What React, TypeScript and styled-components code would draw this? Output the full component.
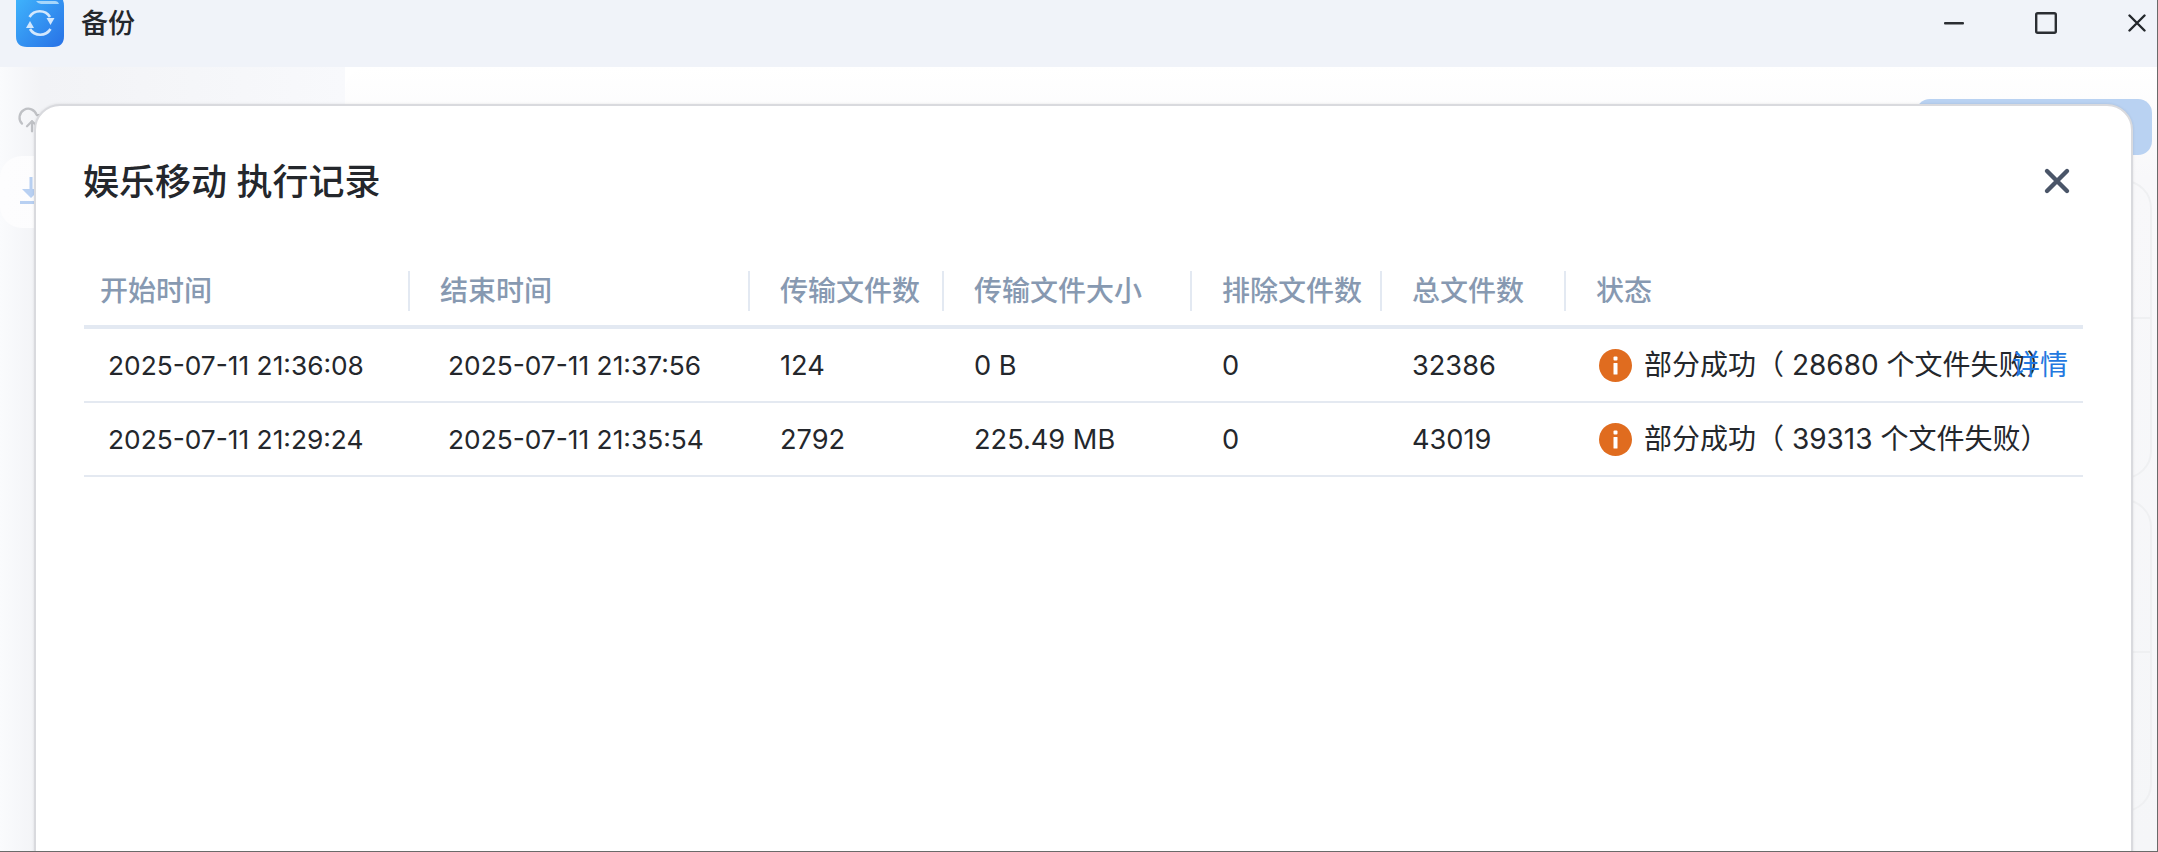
import React from 'react';
import styled, { createGlobalStyle } from 'styled-components';
import { CloudUpload } from 'lucide-react';

const GlobalStyle = createGlobalStyle`
	html, body {
		margin: 0;
		padding: 0;
		background: #fff;
	}
	* {
		box-sizing: border-box;
	}
`;

const COLUMNS = '325px 340px 194px 248px 190px 184px 518px';
const FONT = 'Inter, "Noto Sans CJK SC", sans-serif';

const Window = styled.div`
	position: relative;
	width: 2158px;
	height: 852px;
	overflow: hidden;
	display: flex;
	flex-direction: column;
	font-family: ${FONT};
	color: #24272c;
	border-right: 1px solid #6a6a6a;
	border-bottom: 1px solid #6a6a6a;
`;

const TitleBar = styled.div`
	flex: 0 0 67px;
	background: #f0f3f9;
	display: flex;
	align-items: flex-start;
	padding-left: 16px;
`;

const AppName = styled.div`
	font-size: 27px;
	font-weight: 500;
	line-height: 48px;
	margin-left: 17px;
`;

const WindowControls = styled.div`
	margin-left: auto;
	display: flex;
	align-items: center;
	height: 46px;
	padding-right: 11px;
`;

const MinimizeIcon = styled.svg`
	width: 20px;
	height: 20px;
`;

const MaximizeIcon = styled.svg`
	width: 22px;
	height: 22px;
	margin-left: 71px;
`;

const CloseIcon = styled.svg`
	width: 18px;
	height: 18px;
	margin-left: 71px;
`;

const Body = styled.div`
	flex: 1;
	display: flex;
	min-height: 0;
`;

const Sidebar = styled.div`
	flex: 0 0 345px;
	padding-top: 38px;
	background: linear-gradient(90deg, #fafbfd 0%, #f2f3f6 12%, #f8f9fc 100%);
`;

const SidebarIcon = styled.div`
	height: 30px;
	padding-left: 17px;
	color: #bfc1c5;
	margin-bottom: 21px;
`;

const NavItem = styled.div`
	height: 72px;
	border-radius: 22px;
	background: linear-gradient(90deg, #fdfdfe, #f9f9fb);
	display: flex;
	align-items: center;
	padding-left: 20px;
`;

const Main = styled.div`
	flex: 1;
	min-width: 0;
	padding: 32px 5px 0 0;
	border-radius: 24px 0 0 0;
	background: linear-gradient(180deg, #ffffff 0%, #f8f8fa 14%, #f5f6f8 100%);
	display: flex;
	flex-direction: column;
	align-items: flex-end;
`;

const BlueButton = styled.div`
	width: 236px;
	height: 56px;
	flex: none;
	border-radius: 14px;
	background: #b9d2f2;
`;

const BackgroundCard = styled.div<{ $height: number; $split: number }>`
	width: 100%;
	flex: none;
	height: ${p => p.$height}px;
	margin-top: ${p => (p.$height === 299 ? 25 : 20)}px;
	border: 2px solid #eff0f2;
	border-radius: 28px;
	display: grid;
	grid-template-rows: ${p => p.$split}px 1fr;
`;

const CardDivider = styled.div`
	border-bottom: 2px solid #eff0f2;
`;

const Dialog = styled.div`
	position: absolute;
	left: 34px;
	top: 104px;
	width: 2099px;
	height: 800px;
	background: #fff;
	border: 2px solid #d9dade;
	border-radius: 26px;
	box-shadow: 0 0 3px rgba(0, 0, 0, 0.1);
	padding: 0 48px;
`;

const DialogHeader = styled.div`
	height: 165px;
	display: flex;
	align-items: flex-start;
	justify-content: space-between;
	padding-top: 52px;
`;

const DialogTitle = styled.div`
	margin-left: -1px;
	font-size: 36px;
	line-height: 48px;
	font-weight: 500;
	color: #24272c;
`;

const DialogClose = styled.svg`
	width: 30px;
	height: 30px;
	margin: 8px 11px 0 0;
`;

const HeaderRow = styled.div`
	display: grid;
	grid-template-columns: ${COLUMNS};
	height: 58px;
	border-bottom: 4px solid #e3e9f2;
`;

const HeaderCell = styled.div<{ $first?: boolean; $divided?: boolean }>`
	height: 40px;
	padding-left: ${p => (p.$first ? 16 : 31)}px;
	font-size: 28px;
	line-height: 41px;
	font-weight: 500;
	color: #8799b1;
	white-space: nowrap;
	${p => (p.$divided ? 'border-right: 2px solid #e3e9f2; margin-right: -1px;' : '')}
`;

const Row = styled.div`
	display: grid;
	grid-template-columns: ${COLUMNS};
	height: 74px;
	align-items: center;
	border-bottom: 2px solid #e4e9f1;
`;

const Cell = styled.div<{ $pad?: number; $small?: boolean }>`
	padding: 2px 0 0 ${p => p.$pad ?? 31}px;
	font-size: ${p => (p.$small ? 26.3 : 27.2)}px;
	line-height: 40px;
	white-space: nowrap;
`;

const StatusCell = styled.div`
	position: relative;
	padding-left: 34px;
	display: flex;
	align-items: center;
	gap: 12px;
	font-size: 28px;
	line-height: 40px;
	white-space: nowrap;
`;

const StatusIcon = styled.svg`
	width: 33px;
	height: 33px;
	flex: none;
`;

const DetailLink = styled.a`
	position: absolute;
	left: 447px;
	top: 0;
	font-size: 28px;
	line-height: 40px;
	color: #2378e0;
	text-decoration: none;
`;

const records = [
	{
		start: '2025-07-11 21:36:08',
		end: '2025-07-11 21:37:56',
		count: '124',
		size: '0 B',
		excluded: '0',
		total: '32386',
		status: '部分成功（ 28680 个文件失败）',
		detail: true,
	},
	{
		start: '2025-07-11 21:29:24',
		end: '2025-07-11 21:35:54',
		count: '2792',
		size: '225.49 MB',
		excluded: '0',
		total: '43019',
		status: '部分成功（ 39313 个文件失败）',
		detail: false,
	},
];

const headers = ['开始时间', '结束时间', '传输文件数', '传输文件大小', '排除文件数', '总文件数', '状态'];

const AppLogo = () => (
	<svg width="48" height="47" viewBox="0 0 48 47">
		<defs>
			<linearGradient id="logoFill" x1="0" y1="0" x2="1" y2="1">
				<stop offset="0" stopColor="#40b6fd" />
				<stop offset="1" stopColor="#2871e6" />
			</linearGradient>
		</defs>
		<path d="M0 -6 H36 Q48 -6 48 6 V36 Q48 47 37 47 H11 Q0 47 0 36 Z" fill="url(#logoFill)" />
		<path d="M20 1 H39 Q42 1 43 4 H25 Q22 4 20 1 Z" fill="#a6d6fb" />
		<path d="M13.5 17 A12 12 0 0 1 34 17" fill="none" stroke="#d3e8fd" strokeWidth="2.6" />
		<path d="M34.5 29 A12 12 0 0 1 14 29" fill="none" stroke="#d3e8fd" strokeWidth="2.6" />
		<path d="M30.5 18 L38.5 18 L34.5 25 Z" fill="#d3e8fd" />
		<path d="M10 28 L18 28 L14 21 Z" fill="#d3e8fd" />
	</svg>
);

const DownloadIcon = () => (
	<svg width="24" height="30" viewBox="0 0 24 30">
		<path d="M9.5 0 H12.5 V12 H20 L11 21 L2 12 H9.5 Z" fill="#b8d0f2" />
		<rect x="0" y="24" width="24" height="3" fill="#b8d0f2" />
	</svg>
);

const InfoIcon = () => (
	<StatusIcon viewBox="0 0 33 33">
		<circle cx="16.5" cy="16.5" r="16.5" fill="#e06c1f" />
		<rect x="14.5" y="7.5" width="4" height="4" rx="1" fill="#fff" />
		<rect x="14.5" y="14" width="4" height="11.5" rx="0.5" fill="#fff" />
	</StatusIcon>
);

const App: React.FunctionComponent = () => {
	return (
		<Window>
			<GlobalStyle />
			<TitleBar>
				<AppLogo />
				<AppName>备份</AppName>
				<WindowControls>
					<MinimizeIcon viewBox="0 0 20 20">
						<rect x="0" y="9" width="20" height="2.6" rx="1" fill="#2b2e33" />
					</MinimizeIcon>
					<MaximizeIcon viewBox="0 0 22 22">
						<rect x="1.2" y="1.2" width="19.6" height="19.6" rx="1.5" fill="none" stroke="#2b2e33" strokeWidth="2.4" />
					</MaximizeIcon>
					<CloseIcon viewBox="0 0 18 18">
						<path d="M1.5 1.5 L16.5 16.5 M16.5 1.5 L1.5 16.5" stroke="#24272c" strokeWidth="2.4" strokeLinecap="round" />
					</CloseIcon>
				</WindowControls>
			</TitleBar>
			<Body>
				<Sidebar>
					<SidebarIcon>
						<CloudUpload size={30} strokeWidth={1.8} />
					</SidebarIcon>
					<NavItem>
						<DownloadIcon />
					</NavItem>
				</Sidebar>
				<Main>
					<BlueButton />
					<BackgroundCard $height={299} $split={137}>
						<CardDivider />
					</BackgroundCard>
					<BackgroundCard $height={313} $split={152}>
						<CardDivider />
					</BackgroundCard>
				</Main>
			</Body>
			<Dialog>
				<DialogHeader>
					<DialogTitle>娱乐移动 执行记录</DialogTitle>
					<DialogClose viewBox="0 0 30 30">
						<path d="M5 5 L25 25 M25 5 L5 25" stroke="#4a5568" strokeWidth="4.4" strokeLinecap="round" />
					</DialogClose>
				</DialogHeader>
				<HeaderRow>
					{headers.map((title, index) => (
						<HeaderCell key={title} $first={index === 0} $divided={index < headers.length - 1}>
							{title}
						</HeaderCell>
					))}
				</HeaderRow>
				{records.map(record => (
					<Row key={record.start}>
						<Cell $pad={24} $small>{record.start}</Cell>
						<Cell $pad={39} $small>{record.end}</Cell>
						<Cell>{record.count}</Cell>
						<Cell>{record.size}</Cell>
						<Cell>{record.excluded}</Cell>
						<Cell>{record.total}</Cell>
						<StatusCell>
							<InfoIcon />
							{record.status}
							{record.detail && <DetailLink href="#">详情</DetailLink>}
						</StatusCell>
					</Row>
				))}
			</Dialog>
		</Window>
	);
};

export default App;
